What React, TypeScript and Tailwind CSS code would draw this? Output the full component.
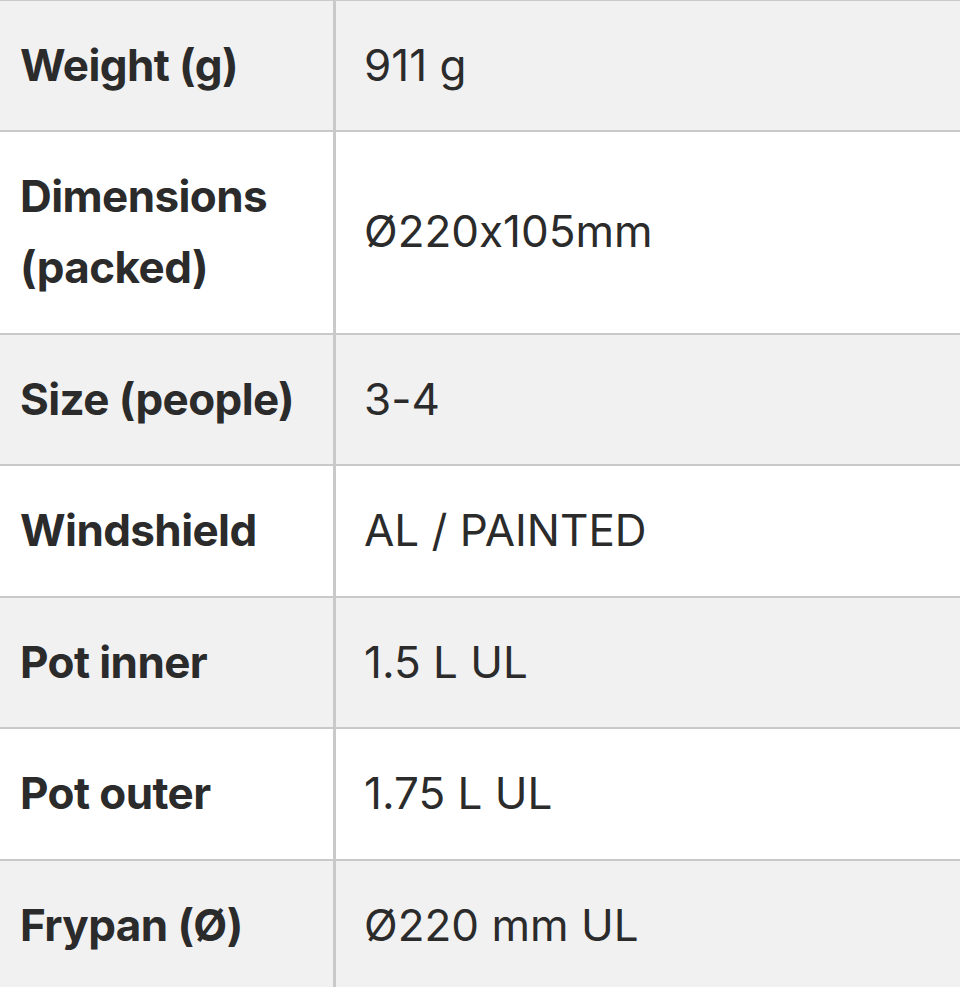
const specs: { label: string; value: string }[] = [
  { label: "Weight (g)", value: "911 g" },
  { label: "Dimensions (packed)", value: "Ø220x105mm" },
  { label: "Size (people)", value: "3-4" },
  { label: "Windshield", value: "AL / PAINTED" },
  { label: "Pot inner", value: "1.5 L UL" },
  { label: "Pot outer", value: "1.75 L UL" },
  { label: "Frypan (Ø)", value: "Ø220 mm UL" },
]

export default function App() {
  return (
    <div
      className="w-[960px] h-[987px] overflow-hidden bg-white text-[#2b2b2b] border-t border-[#cacaca] [font-feature-settings:'calt'_0]"
      style={{ fontFamily: "Inter, 'Open Sans', sans-serif" }}
    >
      {specs.map((row, i) => (
        <div
          key={row.label}
          className={`grid grid-cols-[336px_1fr] border-b-2 border-[#c9c9c9] ${
            i % 2 === 0 ? "bg-[#f1f1f1]" : "bg-white"
          }`}
        >
          <div
            className={`border-r-[3px] border-[#c9c9c9] pl-[20px] pr-4 ${
              i === 0 ? "py-[28.5px]" : "py-[29px]"
            } text-[44px] leading-[71.5px] font-bold tracking-[-0.6px]`}
          >
            {row.label === "Dimensions (packed)" ? (
              <>
                Dimensions
                <br />
                (packed)
              </>
            ) : (
              row.label
            )}
          </div>
          <div className="flex items-center pl-[28px] text-[44px] leading-[71.5px] font-normal">
            {row.value}
          </div>
        </div>
      ))}
    </div>
  )
}
